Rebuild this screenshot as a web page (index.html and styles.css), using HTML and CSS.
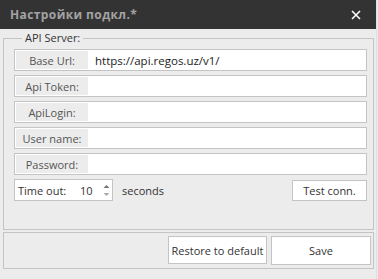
FILE: index.html
```html
<!DOCTYPE html>
<html>
<head>
<meta charset="utf-8">
<link rel="stylesheet" href="styles.css">
</head>
<body>
<div class="window">
  <div class="titlebar">
    <span class="title">Настройки подкл.*</span>
    <span class="close">
      <svg width="10" height="10" viewBox="0 0 10 10"><path d="M1 1L9 9M9 1L1 9" stroke="#fff" stroke-width="1.6"/></svg>
    </span>
  </div>
  <fieldset class="group">
    <legend class="legend">API Server:</legend>
    <div class="field"><span class="label">Base Url:</span><span class="value">https://api.regos.uz/v1/</span></div>
    <div class="field"><span class="label">Api Token:</span><span class="value"></span></div>
    <div class="field"><span class="label">ApiLogin:</span><span class="value"></span></div>
    <div class="field"><span class="label">User name:</span><span class="value"></span></div>
    <div class="field"><span class="label">Password:</span><span class="value"></span></div>
    <div class="timeout-row">
      <div class="spin-box">
        <span class="spin-label">Time out:</span>
        <span class="spin-value">10</span>
        <span class="spin-arrows">
          <svg width="7" height="13" viewBox="0 0 7 13"><path d="M0.5 4L3.5 1L6.5 4Z" fill="#777"/><path d="M0.5 9L3.5 12L6.5 9Z" fill="#aaa"/></svg>
        </span>
      </div>
      <span class="seconds">seconds</span>
      <button class="btn test">Test conn.</button>
    </div>
  </fieldset>
  <div class="footer">
    <button class="btn restore">Restore to default</button>
    <button class="btn save">Save</button>
  </div>
</div>
</body>
</html>
```
FILE: styles.css
```css
html, body {
  margin: 0;
  padding: 0;
  background: #ececec;
}
body {
  font-family: "Open Sans", "Noto Sans", sans-serif;
  font-size: 11px;
  color: #333;
}
.window {
  width: 376px;
  height: 279px;
  background: #ececec;
  border-right: 1px solid #e0e0e0;
}
.titlebar {
  height: 29px;
  background: #333333;
  display: flex;
  align-items: center;
  justify-content: space-between;
  padding: 0 15px 0 10px;
}
.title {
  color: #a3a3a3;
  font-weight: bold;
  font-size: 12px;
  letter-spacing: 0.4px;
}
.close {
  display: flex;
  width: 10px;
  height: 10px;
}
.group {
  margin: 1px 0 0 3px;
  width: 371px;
  height: 200px;
  box-sizing: border-box;
  border: 1px solid #c4c4c4;
  padding: 3px 6px 9px 10px;
  display: flex;
  flex-direction: column;
  gap: 4px;
}
.legend {
  padding: 0 3px;
  margin-left: 8px;
  color: #333;
  line-height: 16px;
}
.field {
  display: flex;
  height: 22px;
  box-sizing: border-box;
  border: 1px solid #c4c4c4;
  background: #fff;
  padding: 1px;
}
.label {
  width: 72px;
  background: #ececec;
  color: #555;
  display: flex;
  align-items: center;
  justify-content: center;
}
.value {
  flex: 1;
  padding-left: 7px;
  display: flex;
  align-items: center;
  color: #222;
  font-size: 11.5px;
}
.timeout-row {
  display: flex;
  align-items: center;
  height: 22px;
}
.spin-box {
  width: 99px;
  height: 22px;
  box-sizing: border-box;
  border: 1px solid #c4c4c4;
  background: #fff;
  display: flex;
  align-items: center;
  padding-left: 3px;
  color: #333;
}
.spin-label {
  width: 62px;
}
.spin-value {
  width: 23px;
}
.spin-arrows {
  display: flex;
}
.seconds {
  margin-left: 9px;
  flex: 1;
}
.btn {
  font-family: inherit;
  font-size: 11px;
  color: #333;
  background: #fff;
  border: 1px solid #c4c4c4;
  padding: 0;
  margin: 0;
}
.test {
  width: 75px;
  height: 21px;
}
.footer {
  margin: 2px 0 0 3px;
  width: 371px;
  height: 37px;
  box-sizing: border-box;
  border: 1px solid #c4c4c4;
  display: flex;
  justify-content: flex-end;
  align-items: flex-start;
  gap: 4px;
  padding: 3px 2px 0 0;
}
.restore {
  width: 99px;
  height: 28px;
}
.save {
  width: 100px;
  height: 29px;
}
```
